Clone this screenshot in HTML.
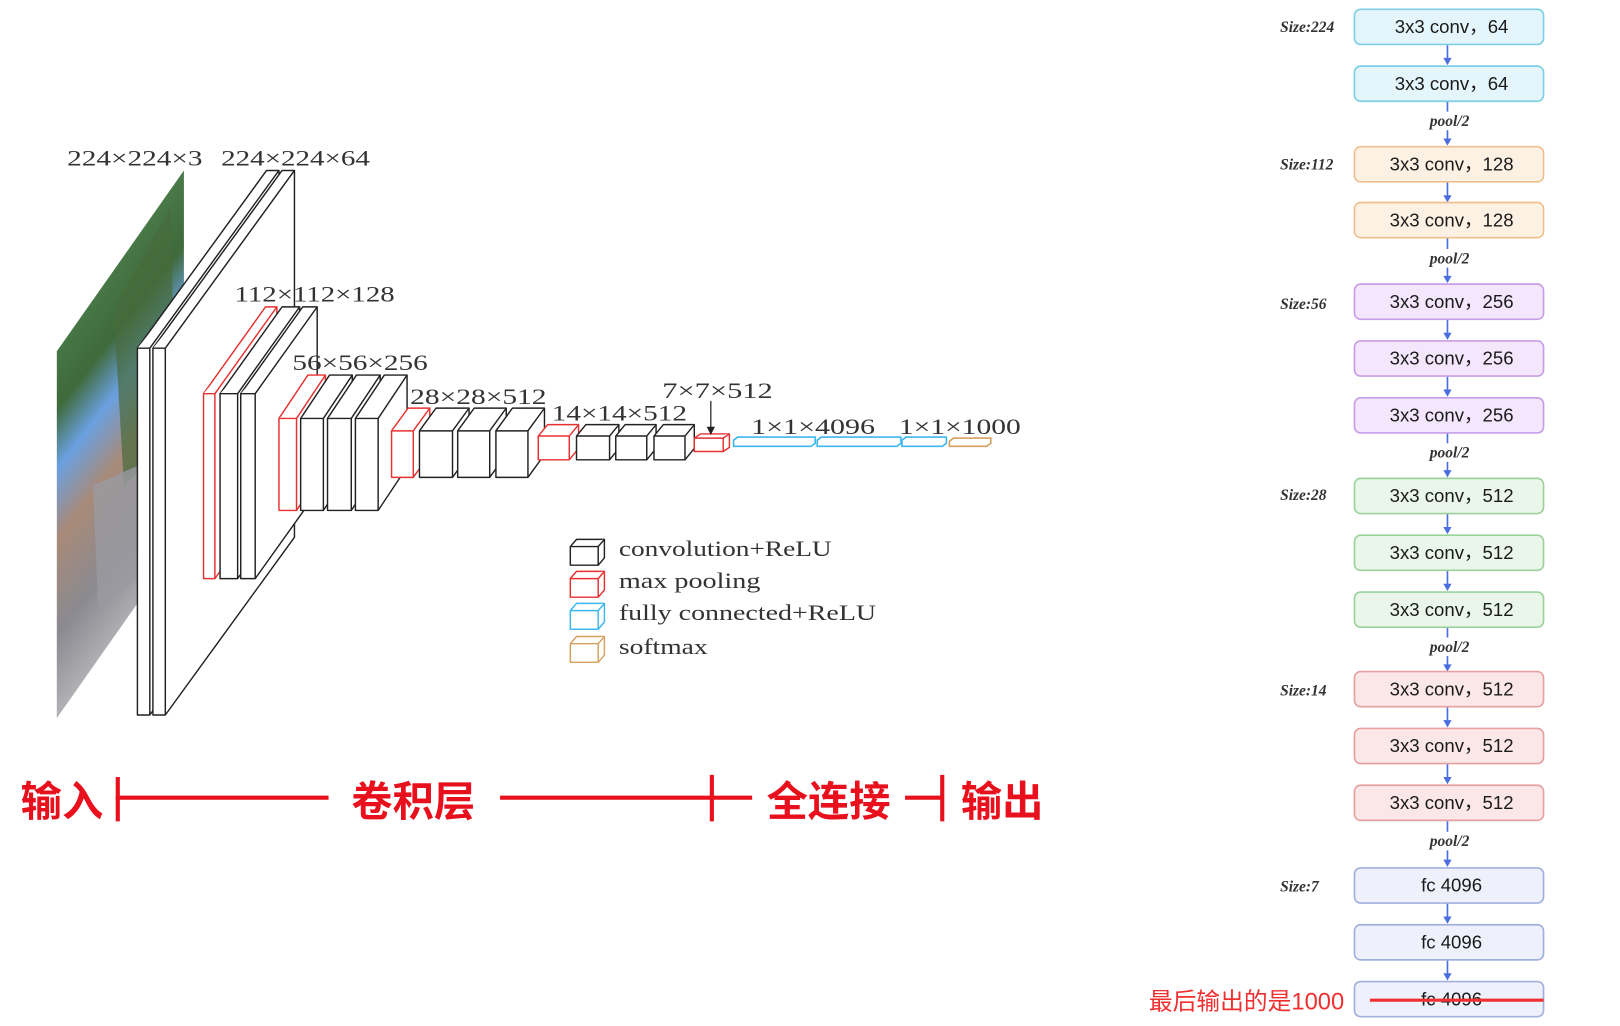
<!DOCTYPE html>
<html><head><meta charset="utf-8"><style>html,body{margin:0;padding:0;background:#fff;width:1620px;height:1026px;overflow:hidden}svg{display:block}</style></head><body>
<svg width="1620" height="1026" viewBox="0 0 1568 993" preserveAspectRatio="none" xmlns="http://www.w3.org/2000/svg">
<defs>
<linearGradient id="ph" x1="0" y1="0" x2="0.3" y2="1">
<stop offset="0" stop-color="#4f8fe0"/><stop offset="0.25" stop-color="#4a7d4a"/><stop offset="0.4" stop-color="#3f6a3a"/><stop offset="0.5" stop-color="#6aa0e0"/><stop offset="0.62" stop-color="#a88a78"/><stop offset="0.78" stop-color="#8a8a90"/><stop offset="1" stop-color="#c8c8cc"/>
</linearGradient>
</defs>
<polygon points="55,340 178,165 178,520 55,695" fill="url(#ph)"/>
<polygon points="110,300 165,200 170,420 120,470" fill="#476b3c" opacity="0.7"/>
<polygon points="90,470 135,450 135,560 95,590" fill="#9a9aa0" opacity="0.8"/>
<g stroke="#222" stroke-width="1.4" fill="#fff" stroke-linejoin="round">
<path d="M133,337 L258,165 L270,165 L270,520 L145,692 L133,692 Z"/><path d="M133,337 L145,337 L270,165 M145,337 L145,692"/>
<path d="M148,337 L273,165 L285,165 L285,520 L160,692 L148,692 Z"/><path d="M148,337 L160,337 L285,165 M160,337 L160,692"/>
</g>
<g fill="#fff" stroke-width="1.4" stroke-linejoin="round">
<g stroke="#e83030"><path d="M197,381 L257,297 L268,297 L268,476 L208,560 L197,560 Z"/><path d="M197,381 L208,381 L268,297 M208,381 L208,560"/></g>
<g stroke="#222"><path d="M213,381 L273,297 L290,297 L290,476 L230,560 L213,560 Z"/><path d="M213,381 L230,381 L290,297 M230,381 L230,560"/>
<path d="M233,381 L293,297 L307,297 L307,476 L247,560 L233,560 Z"/><path d="M233,381 L247,381 L307,297 M247,381 L247,560"/></g>
<g stroke="#e83030"><path d="M270,405 L298,363 L315,363 L315,452 L287,494 L270,494 Z"/><path d="M270,405 L287,405 L315,363 M287,405 L287,494"/></g>
<g stroke="#222">
<path d="M291,405 L319,363 L341,363 L341,452 L313,494 L291,494 Z"/><path d="M291,405 L313,405 L341,363 M313,405 L313,494"/>
<path d="M317,405 L345,363 L368,363 L368,452 L340,494 L317,494 Z"/><path d="M317,405 L340,405 L368,363 M340,405 L340,494"/>
<path d="M344,405 L372,363 L394,363 L394,452 L366,494 L344,494 Z"/><path d="M344,405 L366,405 L394,363 M366,405 L366,494"/></g>
<g stroke="#e83030"><path d="M379,417 L395,395 L416,395 L416,440 L400,462 L379,462 Z"/><path d="M379,417 L400,417 L416,395 M400,417 L400,462"/></g>
<g stroke="#222">
<path d="M406,417 L422,395 L454,395 L454,440 L438,462 L406,462 Z"/><path d="M406,417 L438,417 L454,395 M438,417 L438,462"/>
<path d="M443,417 L459,395 L490,395 L490,440 L474,462 L443,462 Z"/><path d="M443,417 L474,417 L490,395 M474,417 L474,462"/>
<path d="M480,417 L496,395 L527,395 L527,440 L511,462 L480,462 Z"/><path d="M480,417 L511,417 L527,395 M511,417 L511,462"/></g>
<g stroke="#e83030"><path d="M521,422 L530,411 L560,411 L560,434 L551,445 L521,445 Z"/><path d="M521,422 L551,422 L560,411 M551,422 L551,445"/></g>
<g stroke="#222">
<path d="M558,422 L567,411 L599,411 L599,434 L590,445 L558,445 Z"/><path d="M558,422 L590,422 L599,411 M590,422 L590,445"/>
<path d="M596,422 L605,411 L635,411 L635,434 L626,445 L596,445 Z"/><path d="M596,422 L626,422 L635,411 M626,422 L626,445"/>
<path d="M633,422 L642,411 L672,411 L672,434 L663,445 L633,445 Z"/><path d="M633,422 L663,422 L672,411 M663,422 L663,445"/></g>
<g stroke="#e83030"><path d="M672,424 L678,420 L706,420 L706,433 L700,437 L672,437 Z"/><path d="M672,424 L700,424 L706,420 M700,424 L700,437"/></g>
<g stroke="#3cb8f0" stroke-width="1.6">
<path d="M710,426 L714,423 L789,423 L789,429 L785,432 L710,432 Z"/>
<path d="M791,426 L795,423 L872,423 L872,429 L868,432 L791,432 Z"/>
<path d="M873,426 L877,423 L916,423 L916,429 L912,432 L873,432 Z"/></g>
<g stroke="#d4a060" stroke-width="1.6"><path d="M919,427 L923,424 L959,424 L959,429 L955,432 L919,432 Z"/></g>
<g stroke="#222"><path d="M552,529 L558,522 L585,522 L585,540 L579,547 L552,547 Z"/><path d="M552,529 L579,529 L585,522 M579,529 L579,547"/></g>
<g stroke="#e83030"><path d="M552,560 L558,553 L585,553 L585,571 L579,578 L552,578 Z"/><path d="M552,560 L579,560 L585,553 M579,560 L579,578"/></g>
<g stroke="#3cb8f0"><path d="M552,591 L558,584 L585,584 L585,602 L579,609 L552,609 Z"/><path d="M552,591 L579,591 L585,584 M579,591 L579,609"/></g>
<g stroke="#d4a060"><path d="M552,623 L558,616 L585,616 L585,634 L579,641 L552,641 Z"/><path d="M552,623 L579,623 L585,616 M579,623 L579,641"/></g>
</g>
<line x1="688" y1="388" x2="688" y2="418" stroke="#222" stroke-width="1.2"/><path d="M684,413 L688,421 L692,413 Z" fill="#222"/>
<g font-family="Liberation Serif, serif" font-size="21" fill="#333" lengthAdjust="spacingAndGlyphs">
<text x="65" y="160" textLength="131" lengthAdjust="spacingAndGlyphs">224×224×3</text><text x="214" y="160" textLength="144" lengthAdjust="spacingAndGlyphs">224×224×64</text>
<text x="227" y="292" textLength="155" lengthAdjust="spacingAndGlyphs">112×112×128</text><text x="283" y="358" textLength="131" lengthAdjust="spacingAndGlyphs">56×56×256</text>
<text x="397" y="391" textLength="132" lengthAdjust="spacingAndGlyphs">28×28×512</text><text x="534" y="407" textLength="131" lengthAdjust="spacingAndGlyphs">14×14×512</text>
<text x="641" y="385" textLength="107" lengthAdjust="spacingAndGlyphs">7×7×512</text><text x="727" y="420" textLength="120" lengthAdjust="spacingAndGlyphs">1×1×4096</text><text x="870" y="420" textLength="118" lengthAdjust="spacingAndGlyphs">1×1×1000</text>
<text x="599" y="538" textLength="206" lengthAdjust="spacingAndGlyphs">convolution+ReLU</text><text x="599" y="569" textLength="137" lengthAdjust="spacingAndGlyphs">max pooling</text>
<text x="599" y="600" textLength="249" lengthAdjust="spacingAndGlyphs">fully connected+ReLU</text><text x="599" y="633" textLength="86" lengthAdjust="spacingAndGlyphs">softmax</text>
</g>
<g font-family="Liberation Sans, Noto Sans CJK SC, sans-serif" font-size="40" font-weight="bold" fill="#e8101c">
<text x="20" y="790">输入</text><text x="340" y="790">卷积层</text><text x="742" y="790">全连接</text><text x="930" y="790">输出</text>
</g>
<g stroke="#e8101c" stroke-width="4">
<line x1="112" y1="772" x2="318" y2="772"/><line x1="114" y1="752" x2="114" y2="795"/>
<line x1="484" y1="772" x2="728" y2="772"/><line x1="689" y1="750" x2="689" y2="795"/>
<line x1="876" y1="772" x2="912" y2="772"/><line x1="912" y1="750" x2="912" y2="795"/>
</g>
<g stroke="#4a6ee0" stroke-width="1.6">
<line x1="1401" y1="43" x2="1401" y2="58"/><line x1="1401" y1="98" x2="1401" y2="108"/><line x1="1401" y1="126" x2="1401" y2="136"/>
<line x1="1401" y1="176" x2="1401" y2="191"/><line x1="1401" y1="230" x2="1401" y2="241"/><line x1="1401" y1="259" x2="1401" y2="269"/>
<line x1="1401" y1="309" x2="1401" y2="324"/><line x1="1401" y1="364" x2="1401" y2="379"/><line x1="1401" y1="419" x2="1401" y2="429"/><line x1="1401" y1="447" x2="1401" y2="457"/>
<line x1="1401" y1="497" x2="1401" y2="512"/><line x1="1401" y1="552" x2="1401" y2="567"/><line x1="1401" y1="607" x2="1401" y2="617"/><line x1="1401" y1="635" x2="1401" y2="645"/>
<line x1="1401" y1="684" x2="1401" y2="699"/><line x1="1401" y1="739" x2="1401" y2="754"/><line x1="1401" y1="794" x2="1401" y2="805"/><line x1="1401" y1="823" x2="1401" y2="834"/>
<line x1="1401" y1="874" x2="1401" y2="889"/><line x1="1401" y1="929" x2="1401" y2="944"/>
</g>
<g fill="#4a6ee0">
<path d="M1397,56 L1405,56 L1401,63 Z"/><path d="M1397,134 L1405,134 L1401,141 Z"/><path d="M1397,189 L1405,189 L1401,196 Z"/><path d="M1397,267 L1405,267 L1401,274 Z"/>
<path d="M1397,322 L1405,322 L1401,329 Z"/><path d="M1397,377 L1405,377 L1401,384 Z"/><path d="M1397,455 L1405,455 L1401,462 Z"/><path d="M1397,510 L1405,510 L1401,517 Z"/>
<path d="M1397,565 L1405,565 L1401,572 Z"/><path d="M1397,643 L1405,643 L1401,650 Z"/><path d="M1397,697 L1405,697 L1401,704 Z"/><path d="M1397,752 L1405,752 L1401,759 Z"/>
<path d="M1397,832 L1405,832 L1401,839 Z"/><path d="M1397,887 L1405,887 L1401,894 Z"/><path d="M1397,942 L1405,942 L1401,949 Z"/>
</g>
<g stroke-width="1.6">
<g fill="#e4f6fc" stroke="#7ccfe6"><rect x="1311" y="9" width="183" height="34" rx="6"/><rect x="1311" y="64" width="183" height="34" rx="6"/></g>
<g fill="#fdf1e3" stroke="#efc08e"><rect x="1311" y="142" width="183" height="34" rx="6"/><rect x="1311" y="196" width="183" height="34" rx="6"/></g>
<g fill="#f4e6fc" stroke="#c79ee6"><rect x="1311" y="275" width="183" height="34" rx="6"/><rect x="1311" y="330" width="183" height="34" rx="6"/><rect x="1311" y="385" width="183" height="34" rx="6"/></g>
<g fill="#eaf6ea" stroke="#9bd29c"><rect x="1311" y="463" width="183" height="34" rx="6"/><rect x="1311" y="518" width="183" height="34" rx="6"/><rect x="1311" y="573" width="183" height="34" rx="6"/></g>
<g fill="#fbe7e7" stroke="#e6a0a0"><rect x="1311" y="650" width="183" height="34" rx="6"/><rect x="1311" y="705" width="183" height="34" rx="6"/><rect x="1311" y="760" width="183" height="34" rx="6"/></g>
<g fill="#eef0fb" stroke="#a2b0de"><rect x="1311" y="840" width="183" height="34" rx="6"/><rect x="1311" y="895" width="183" height="34" rx="6"/><rect x="1311" y="950" width="183" height="34" rx="6"/></g>
</g>
<g font-family="Liberation Sans, Noto Sans CJK SC, sans-serif" font-size="18" fill="#1a1a1a" text-anchor="middle">
<text x="1405" y="32">3x3 conv，64</text><text x="1405" y="87">3x3 conv，64</text>
<text x="1405" y="165">3x3 conv，128</text><text x="1405" y="219">3x3 conv，128</text>
<text x="1405" y="298">3x3 conv，256</text><text x="1405" y="353">3x3 conv，256</text><text x="1405" y="408">3x3 conv，256</text>
<text x="1405" y="486">3x3 conv，512</text><text x="1405" y="541">3x3 conv，512</text><text x="1405" y="596">3x3 conv，512</text>
<text x="1405" y="673">3x3 conv，512</text><text x="1405" y="728">3x3 conv，512</text><text x="1405" y="783">3x3 conv，512</text>
<text x="1405" y="863">fc 4096</text><text x="1405" y="918">fc 4096</text><text x="1405" y="973">fc 4096</text>
</g>
<g font-family="Liberation Serif, serif" font-size="15" font-style="italic" font-weight="bold" fill="#333">
<text x="1403" y="122" text-anchor="middle">pool/2</text><text x="1403" y="255" text-anchor="middle">pool/2</text><text x="1403" y="443" text-anchor="middle">pool/2</text><text x="1403" y="631" text-anchor="middle">pool/2</text><text x="1403" y="819" text-anchor="middle">pool/2</text>
<text x="1239" y="31">Size:224</text><text x="1239" y="164">Size:112</text><text x="1239" y="299">Size:56</text><text x="1239" y="484">Size:28</text><text x="1239" y="673">Size:14</text><text x="1239" y="863">Size:7</text>
</g>
<line x1="1326" y1="968" x2="1494" y2="968" stroke="#f03030" stroke-width="3"/>
<text x="1112" y="977" font-family="Liberation Sans, Noto Sans CJK SC, sans-serif" font-size="23" fill="#f03030">最后输出的是1000</text>
</svg>
</body></html>
